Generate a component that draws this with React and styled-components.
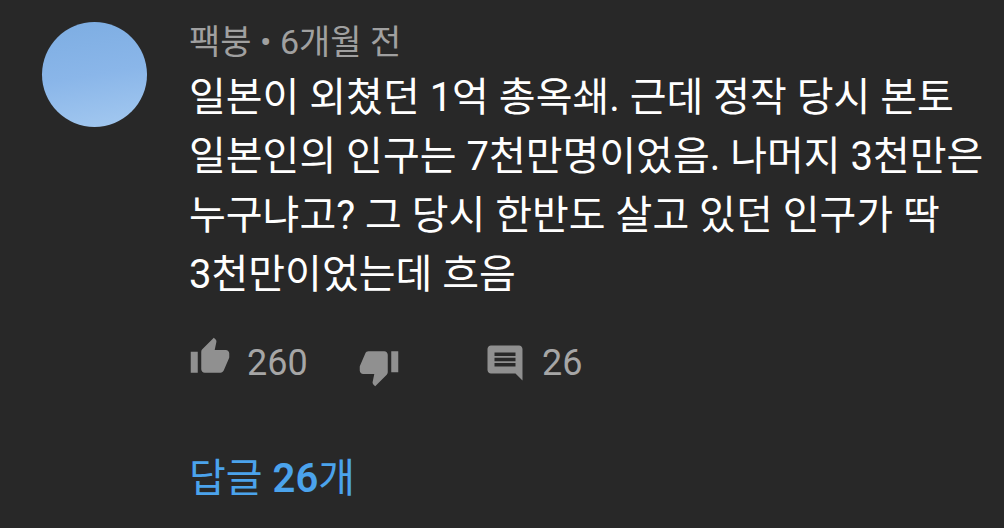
import React from 'react'
import styled, { createGlobalStyle } from 'styled-components'

const GlobalStyle = createGlobalStyle`
    body {
        margin: 0;
        background-color: #282828;
        font-family: Roboto, 'Noto Sans CJK KR', sans-serif;
    }
`

const text = '일본이 외쳤던 1억 총옥쇄. 근데 정작 당시 본토 일본인의 인구는 7천만명이었음. 나머지 3천만은 누구냐고? 그 당시 한반도 살고 있던 인구가 딱 3천만이었는데 흐음'

const App = () => {
    return (
    <>
        <GlobalStyle />
        <StyledComment>
            <StyledAvatar role='img' aria-label='팩붕' />
            <StyledBody>
                <StyledMeta>팩붕 • 6개월 전</StyledMeta>
                <StyledText>{text}</StyledText>
                <StyledActions>
                    <StyledAction $width={169} aria-label='좋아요 260'>
                        <StyledIcon viewBox='0 0 24 24' $lift={12}>
                            <path d='M1 21h4V9H1v12zm22-11c0-1.1-.9-2-2-2h-6.31l.95-4.57.03-.32c0-.41-.17-.79-.44-1.06L14.17 1 7.59 7.59C7.22 7.95 7 8.45 7 9v10c0 1.1.9 2 2 2h9c.83 0 1.54-.5 1.84-1.22l3.02-7.05c.09-.23.14-.47.14-.73v-2z' />
                        </StyledIcon>
                        260
                    </StyledAction>
                    <StyledAction $width={126} aria-label='싫어요'>
                        <StyledIcon viewBox='0 0 24 24' $lift={-8}>
                            <path d='M15 3H6c-.83 0-1.54.5-1.84 1.22l-3.02 7.05c-.09.23-.14.47-.14.73v2c0 1.1.9 2 2 2h6.31l-.95 4.57-.03.32c0 .41.17.79.44 1.06L9.83 23l6.59-6.59c.36-.36.58-.86.58-1.41V5c0-1.1-.9-2-2-2zm4 0v12h4V3h-4z' />
                        </StyledIcon>
                    </StyledAction>
                    <StyledAction aria-label='답글 26'>
                        <StyledIcon viewBox='0 0 24 24' $lift={0}>
                            <path d='M21.99 4c0-1.1-.89-2-1.99-2H4c-1.1 0-2 .9-2 2v12c0 1.1.9 2 2 2h14l4 4-.01-18zM18 14H6v-2h12v2zm0-3H6V9h12v2zm0-3H6V6h12v2z' />
                        </StyledIcon>
                        26
                    </StyledAction>
                </StyledActions>
                <StyledReplies href='#replies'>답글 <StyledCount>26</StyledCount>개</StyledReplies>
            </StyledBody>
        </StyledComment>
    </>
    )
}

const StyledComment = styled.article`
    display: flex;
    align-items: flex-start;
    gap: 42px;
    padding: 22px 12px 24px 42px;
`

const StyledAvatar = styled.div`
    flex: none;
    width: 105px;
    height: 105px;
    border-radius: 50%;
    background: linear-gradient(170deg, #7dade2, #8ab6e9 50%, #a4c9f0);
`

const StyledBody = styled.div`
    flex: 1;
    min-width: 0;
`

const StyledMeta = styled.div`
    color: #a0a0a0;
    font-size: 34px;
    line-height: 40px;
`

const StyledText = styled.p`
    margin: 6px 0 0;
    color: #fff;
    font-size: 40px;
    line-height: 59px;
    word-break: keep-all;
`

const StyledActions = styled.div`
    display: flex;
    margin-top: 34px;
`

const StyledAction = styled.button`
    display: flex;
    align-items: center;
    gap: 16px;
    width: ${props => props.$width ? props.$width + 'px' : 'auto'};
    height: 50px;
    padding: 0;
    border: 0;
    background: none;
    color: #a6a6a6;
    font-family: inherit;
    font-size: 36px;
    cursor: pointer;
`

const StyledIcon = styled.svg`
    flex: none;
    width: 42px;
    height: 42px;
    fill: #909090;
    margin-bottom: ${props => props.$lift}px;
`

const StyledReplies = styled.a`
    display: inline-block;
    margin-top: 66px;
    color: #4ba3ec;
    font-size: 40px;
    line-height: 50px;
    text-decoration: none;
`

const StyledCount = styled.span`
    font-weight: 600;
`

export default App
